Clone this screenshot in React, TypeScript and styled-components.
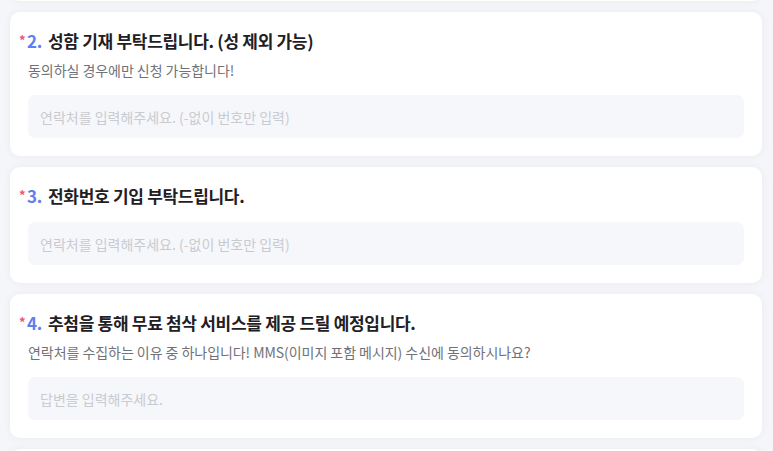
import * as React from 'react'
import styled, { createGlobalStyle } from 'styled-components'

const GlobalStyle = createGlobalStyle`
  html, body {
    margin: 0;
    padding: 0;
    background: #f5f6f9;
    font-family: "Noto Sans CJK KR", "Noto Sans", sans-serif;
    overflow: hidden;
  }
`

// the form is scrolled: question 1 sits above the frame
const Page = styled.div`
  box-sizing: border-box;
  padding: 0 11px 0 10px;
  display: flex;
  flex-direction: column;
  gap: 11px;
  margin-top: -143px;
`

const Card = styled.section`
  box-sizing: border-box;
  background: #fff;
  border-radius: 10px;
  padding: 18px;
  box-shadow: 0 0 10px rgba(30, 40, 80, 0.05);
  display: flex;
  flex-direction: column;
`

const Title = styled.h2`
  margin: 0 0 0 -9px;
  font-size: 17px;
  line-height: 22px;
  font-weight: 700;
  color: #1f2024;
  letter-spacing: -0.3px;
  display: flex;
  align-items: center;
`

const Required = styled.span`
  color: #f2536e;
  font-size: 13px;
  width: 8px;
  margin-top: -2px;
`

const Num = styled.span`
  color: #5f7ef2;
  margin-right: 6px;
`

const Desc = styled.p`
  margin: 8px 0 0;
  font-size: 14px;
  line-height: 20px;
  color: #707278;
  letter-spacing: -0.05px;
`

const Field = styled.input`
  box-sizing: border-box;
  margin-top: 15px;
  height: 43px;
  width: 100%;
  border: 0;
  border-radius: 7px;
  background: #f6f7fa;
  padding: 0 12px;
  font-family: inherit;
  font-size: 14px;
  color: #333;
  outline: none;
  &::placeholder {
    color: #c9cbd1;
  }
`

interface IQuestion {
  no: number;
  title: string;
  desc?: string;
  placeholder: string;
}

const questions: IQuestion[] = [
  { no: 1, title: '이름을 입력해주세요.', desc: '본인 확인을 위해 필요합니다.', placeholder: '답변을 입력해주세요.' },
  { no: 2, title: '성함 기재 부탁드립니다. (성 제외 가능)', desc: '동의하실 경우에만 신청 가능합니다!', placeholder: '연락처를 입력해주세요. (-없이 번호만 입력)' },
  { no: 3, title: '전화번호 기입 부탁드립니다.', placeholder: '연락처를 입력해주세요. (-없이 번호만 입력)' },
  { no: 4, title: '추첨을 통해 무료 첨삭 서비스를 제공 드릴 예정입니다.', desc: '연락처를 수집하는 이유 중 하나입니다! MMS(이미지 포함 메시지) 수신에 동의하시나요?', placeholder: '답변을 입력해주세요.' },
  { no: 5, title: '기타 문의사항이 있으신가요?', placeholder: '답변을 입력해주세요.' },
]

const App: React.FC = () => (
  <>
    <GlobalStyle />
    <Page>
      { questions.map(q => (
        <Card key={ q.no }>
          <Title>
            <Required>*</Required>
            <Num>{ q.no }.</Num>
            { q.title }
          </Title>
          { q.desc && <Desc>{ q.desc }</Desc> }
          <Field placeholder={ q.placeholder } />
        </Card>
      )) }
    </Page>
  </>
)

export default App
